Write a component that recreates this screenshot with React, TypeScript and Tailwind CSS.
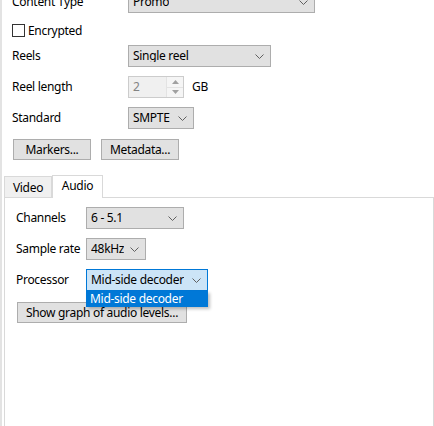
import React from 'react'

function Chevron() {
    return (
        <svg width="9" height="5" viewBox="0 0 9 5" className="shrink-0">
            <path d="M0.5 0.5 L4.5 4.5 L8.5 0.5" fill="none" stroke="#606060" strokeWidth="1" />
        </svg>
    )
}

function Combo({ value, width, focused }: { value: string; width: string; focused?: boolean }) {
    return (
        <div
            className={`flex h-[22px] ${width} items-center justify-between border pl-[4px] pr-[6px] ${
                focused ? 'border-[#0078d7] bg-[#cce4f7]' : 'border-[#adadad] bg-[#e1e1e1]'
            }`}
        >
            <span className="truncate">{value}</span>
            <Chevron />
        </div>
    )
}

function Button({ label, width }: { label: string; width: string }) {
    return (
        <div className={`flex h-[21px] ${width} items-center justify-center border border-[#adadad] bg-[#e1e1e1]`}>
            {label}
        </div>
    )
}

function Row({ label, labelWidth, className, children }: { label: string; labelWidth: string; className?: string; children: React.ReactNode }) {
    return (
        <div className={`flex items-center ${className ?? ''}`}>
            <span className={`${labelWidth} shrink-0`}>{label}</span>
            {children}
        </div>
    )
}

export default function App() {
    return (
        <div className="relative h-[426px] w-[434px] overflow-hidden border-l-2 border-[#e3e3e3] bg-white font-['Segoe_UI','Noto_Sans',sans-serif] text-[12px] leading-none tracking-[-0.3px] text-black">
            <div className="flex flex-col pl-[10px]">
                <Row label="Content Type" labelWidth="w-[116px]" className="mt-[-9px]">
                    <Combo value="Promo" width="w-[187px]" />
                </Row>

                <div className="mt-[11px] flex items-center gap-[3px]">
                    <div className="h-[13px] w-[13px] border border-[#333333] bg-white" />
                    <span>Encrypted</span>
                </div>

                <Row label="Reels" labelWidth="w-[116px]" className="mt-[8px]">
                    <Combo value="Single reel" width="w-[143px]" />
                </Row>

                <Row label="Reel length" labelWidth="w-[116px]" className="mt-[9px]">
                    <div className="flex h-[22px] w-[56px] items-center justify-between border border-[#cccccc] bg-[#f0f0f0] pl-[4px]">
                        <span className="text-[#838383]">2</span>
                        <div className="flex h-full w-[17px] flex-col border-l border-[#e3e3e3]">
                            <div className="flex flex-1 items-center justify-center border-b border-[#e3e3e3] bg-[#f5f5f5]">
                                <svg width="7" height="4" viewBox="0 0 7 4">
                                    <path d="M0 4 L3.5 0 L7 4 Z" fill="#a0a0a0" />
                                </svg>
                            </div>
                            <div className="flex flex-1 items-center justify-center bg-[#f5f5f5]">
                                <svg width="7" height="4" viewBox="0 0 7 4">
                                    <path d="M0 0 L3.5 4 L7 0 Z" fill="#a0a0a0" />
                                </svg>
                            </div>
                        </div>
                    </div>
                    <span className="ml-[8px]">GB</span>
                </Row>

                <Row label="Standard" labelWidth="w-[116px]" className="mt-[9px]">
                    <Combo value="SMPTE" width="w-[66px]" />
                </Row>

                <div className="mt-[10px] ml-[1px] flex gap-[10px]">
                    <Button label="Markers..." width="w-[78px]" />
                    <Button label="Metadata..." width="w-[78px]" />
                </div>
            </div>

            {/* notebook */}
            <div className="mt-[15px] ml-[2px] flex items-end">
                <div className="flex h-[21px] w-[48px] items-center justify-center border border-b-0 border-[#d9d9d9] bg-[#f0f0f0] pt-[2px]">
                    Video
                </div>
                <div className="relative z-10 mb-[-1px] flex h-[23px] w-[51px] items-center justify-center border border-b-0 border-[#d9d9d9] bg-white pb-[2px]">
                    Audio
                </div>
            </div>

            <div className="relative ml-[2px] h-[240px] border border-[#d9d9d9] bg-white pl-[11px] pt-[9px]">
                <div className="flex flex-col gap-[9px]">
                    <Row label="Channels" labelWidth="w-[70px]">
                        <Combo value="6 - 5.1" width="w-[98px]" />
                    </Row>
                    <Row label="Sample rate" labelWidth="w-[70px]">
                        <Combo value="48kHz" width="w-[60px]" />
                    </Row>
                    <Row label="Processor" labelWidth="w-[70px]">
                        <Combo value="Mid-side decoder" width="w-[122px]" focused />
                    </Row>
                    <div className="mt-[2px] ml-[1px]">
                        <Button label="Show graph of audio levels..." width="w-[170px]" />
                    </div>
                </div>

                {/* open dropdown list */}
                <div className="absolute left-[81px] top-[93px] flex h-[16px] w-[122px] items-center bg-[#0078d7] pl-[4px] text-white shadow-[2px_2px_3px_rgba(0,0,0,0.25)]">
                    Mid-side decoder
                </div>
            </div>
        </div>
    )
}
